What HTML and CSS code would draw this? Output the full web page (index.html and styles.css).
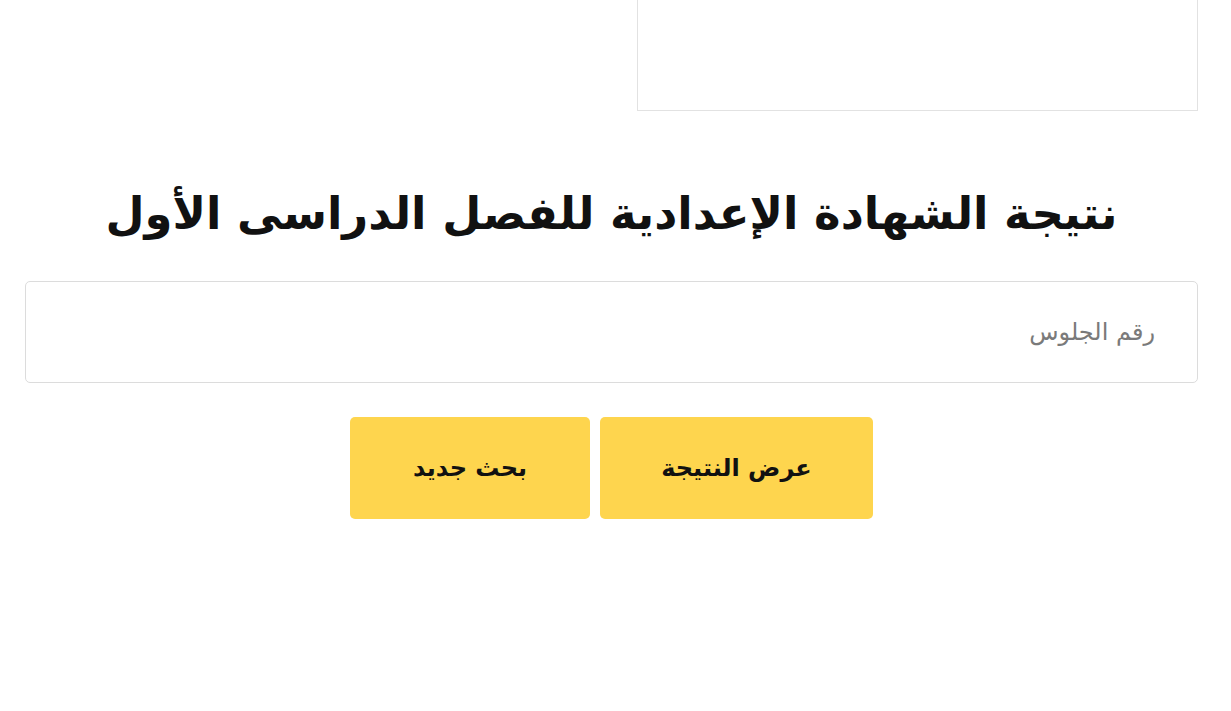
FILE: index.html
```html
<!DOCTYPE html>
<html lang="ar" dir="rtl">
<head>
<meta charset="utf-8">
<title>نتيجة الشهادة الإعدادية</title>
<link rel="stylesheet" href="styles.css">
</head>
<body>
<div class="page">
  <div class="ad-box"></div>
  <h1 class="title">نتيجة الشهادة الإعدادية للفصل الدراسى الأول</h1>
  <form class="search-form">
    <input class="seat-input" type="text" placeholder="رقم الجلوس">
    <div class="actions">
      <button type="button" class="btn btn-show">عرض النتيجة</button>
      <button type="button" class="btn btn-new">بحث جديد</button>
    </div>
  </form>
</div>
</body>
</html>
```
FILE: styles.css
```css
html, body {
  margin: 0;
  padding: 0;
  background: #ffffff;
}
body {
  font-family: "DejaVu Sans", sans-serif;
  color: #111111;
}
.page {
  padding: 0 33px 0 25px;
  display: flex;
  flex-direction: column;
}
.ad-box {
  width: 561px;
  height: 112px;
  margin-top: -1px;
  border: 1px solid #e2e2e2;
  align-self: flex-start;
  box-sizing: border-box;
}
.title {
  margin: 68px 0 0;
  height: 70px;
  line-height: 70px;
  text-align: center;
  font-size: 45px;
  font-weight: 700;
  color: #111111;
}
.search-form {
  margin-top: 32px;
  display: flex;
  flex-direction: column;
}
.seat-input {
  box-sizing: border-box;
  height: 102px;
  width: 100%;
  border: 1px solid #dcdcdc;
  border-radius: 5px;
  padding: 0 42px;
  font-family: "DejaVu Sans", sans-serif;
  font-size: 24px;
  text-align: right;
  outline: none;
  background: #fff;
}
.seat-input::placeholder {
  color: #7a7a7a;
}
.actions {
  margin-top: 34px;
  display: flex;
  justify-content: center;
  gap: 10px;
}
.btn {
  height: 102px;
  border: none;
  border-radius: 5px;
  background: #fed54e;
  color: #111111;
  font-family: "DejaVu Sans", sans-serif;
  font-size: 24px;
  font-weight: 700;
  cursor: pointer;
}
.btn-show {
  width: 273px;
}
.btn-new {
  width: 240px;
}
```
